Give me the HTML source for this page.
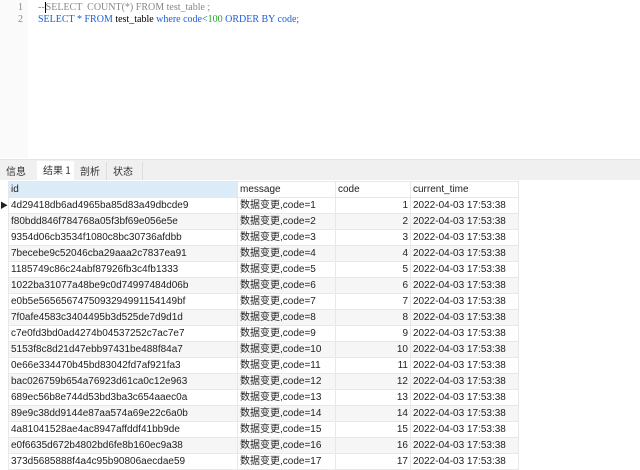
<!DOCTYPE html><html><head><meta charset="utf-8"><style>
body{margin:0;width:640px;height:459px;overflow:hidden;background:#fff;font-family:"Liberation Sans","Noto Sans CJK SC",sans-serif;position:relative}
.gut{position:absolute;left:0;top:0;width:28px;height:158px;background:#fafafa}
.ln{position:absolute;left:18px;font:10px "Liberation Serif",serif;color:#888}
.code{position:absolute;left:38px;font:10px "Liberation Serif","Noto Serif CJK SC",serif;white-space:pre}
.tabs{position:absolute;left:0;top:159px;width:640px;height:20px;background:#f0f0f0;border-top:1px solid #e4e4e4}
.tab{position:absolute;top:2px;height:18px;font-size:10px;line-height:18px;padding-left:6px;color:#333;font-family:"Noto Sans CJK SC",sans-serif}
table{position:absolute;left:0;top:181px;border-collapse:collapse;font-size:10px;color:#222;table-layout:fixed}
tr{height:16px}
td{height:15px;padding:0 2px;border:1px solid #e8e8e8;white-space:nowrap;overflow:hidden;line-height:14px;box-sizing:border-box}
tr.h td{background:#fff}
tr:nth-child(odd):not(.h) td{background:#f6f6f6}
.m{width:8px;padding:0;border:none;background:#fff!important;font-size:8px}
.r{text-align:right}
</style></head><body>
<div class="gut"></div>
<div class="ln" style="top:2px">1</div><div class="ln" style="top:14px">2</div>
<div class="code" style="top:2px;color:#888">--<span style="border-left:1px solid #000"></span>SELECT  COUNT(*) FROM test_table ;</div>
<div class="code" style="top:14px;color:#1a5fd6">SELECT * FROM <span style="color:#000">test_table</span> where code&lt;<span style="color:#2a2">100</span> ORDER BY code;</div>
<div class="tabs">
<div class="tab" style="left:0;width:30px">信息</div>
<div class="tab" style="left:37px;width:31px;background:#fff;top:1px;height:19px">结果 1</div>
<div class="tab" style="left:74px;width:24px">剖析</div>
<div class="tab" style="left:106px;width:29px;border-left:1px solid #ddd;border-right:1px solid #ddd">状态</div>
</div>
<table>
<colgroup><col style="width:8px"><col style="width:229px"><col style="width:98px"><col style="width:75px"><col style="width:108px"></colgroup>
<tr class="h"><td class="m"></td><td style="background:#dcebf8">id</td><td>message</td><td>code</td><td>current_time</td></tr>
<tr><td class="m">▶</td><td>4d29418db6ad4965ba85d83a49dbcde9</td><td>数据变更,code=1</td><td class="r">1</td><td>2022-04-03 17:53:38</td></tr>
<tr><td class="m"></td><td>f80bdd846f784768a05f3bf69e056e5e</td><td>数据变更,code=2</td><td class="r">2</td><td>2022-04-03 17:53:38</td></tr>
<tr><td class="m"></td><td>9354d06cb3534f1080c8bc30736afdbb</td><td>数据变更,code=3</td><td class="r">3</td><td>2022-04-03 17:53:38</td></tr>
<tr><td class="m"></td><td>7becebe9c52046cba29aaa2c7837ea91</td><td>数据变更,code=4</td><td class="r">4</td><td>2022-04-03 17:53:38</td></tr>
<tr><td class="m"></td><td>1185749c86c24abf87926fb3c4fb1333</td><td>数据变更,code=5</td><td class="r">5</td><td>2022-04-03 17:53:38</td></tr>
<tr><td class="m"></td><td>1022ba31077a48be9c0d74997484d06b</td><td>数据变更,code=6</td><td class="r">6</td><td>2022-04-03 17:53:38</td></tr>
<tr><td class="m"></td><td>e0b5e5656567475093294991154149bf</td><td>数据变更,code=7</td><td class="r">7</td><td>2022-04-03 17:53:38</td></tr>
<tr><td class="m"></td><td>7f0afe4583c3404495b3d525de7d9d1d</td><td>数据变更,code=8</td><td class="r">8</td><td>2022-04-03 17:53:38</td></tr>
<tr><td class="m"></td><td>c7e0fd3bd0ad4274b04537252c7ac7e7</td><td>数据变更,code=9</td><td class="r">9</td><td>2022-04-03 17:53:38</td></tr>
<tr><td class="m"></td><td>5153f8c8d21d47ebb97431be488f84a7</td><td>数据变更,code=10</td><td class="r">10</td><td>2022-04-03 17:53:38</td></tr>
<tr><td class="m"></td><td>0e66e334470b45bd83042fd7af921fa3</td><td>数据变更,code=11</td><td class="r">11</td><td>2022-04-03 17:53:38</td></tr>
<tr><td class="m"></td><td>bac026759b654a76923d61ca0c12e963</td><td>数据变更,code=12</td><td class="r">12</td><td>2022-04-03 17:53:38</td></tr>
<tr><td class="m"></td><td>689ec56b8e744d53bd3ba3c654aaec0a</td><td>数据变更,code=13</td><td class="r">13</td><td>2022-04-03 17:53:38</td></tr>
<tr><td class="m"></td><td>89e9c38dd9144e87aa574a69e22c6a0b</td><td>数据变更,code=14</td><td class="r">14</td><td>2022-04-03 17:53:38</td></tr>
<tr><td class="m"></td><td>4a81041528ae4ac8947affddf41bb9de</td><td>数据变更,code=15</td><td class="r">15</td><td>2022-04-03 17:53:38</td></tr>
<tr><td class="m"></td><td>e0f6635d672b4802bd6fe8b160ec9a38</td><td>数据变更,code=16</td><td class="r">16</td><td>2022-04-03 17:53:38</td></tr>
<tr><td class="m"></td><td>373d5685888f4a4c95b90806aecdae59</td><td>数据变更,code=17</td><td class="r">17</td><td>2022-04-03 17:53:38</td></tr>
</table>
</body></html>
